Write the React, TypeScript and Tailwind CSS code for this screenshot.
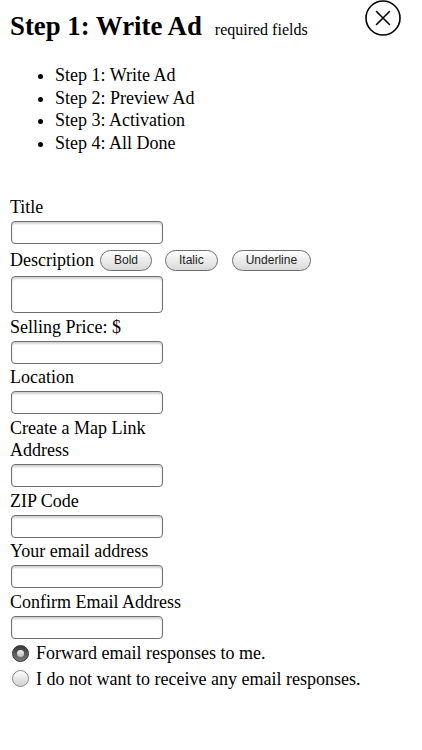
import React from "react";

const inputCls =
  "block ml-[1px] w-[152px] h-[23px] my-[2.45px] rounded-[4px] border border-[#6f6f6f] bg-white shadow-[inset_0_2px_2px_rgba(0,0,0,0.18)] outline-none";

const btnCls =
  "h-[21px] px-[13px] rounded-full border border-[#6e6e6e] bg-gradient-to-b from-white to-[#d9d9d9] text-[12px] leading-[19px] text-[#222] font-['Liberation_Sans',Arial,sans-serif]";

function Label({ children }: { children: React.ReactNode }) {
  return <div className="leading-[22.6px] h-[22.6px]">{children}</div>;
}

function Radio({ checked }: { checked?: boolean }) {
  if (checked) {
    return (
      <span className="flex items-center justify-center w-[17px] h-[17px] rounded-full bg-gradient-to-b from-[#3a3a3a] to-[#7a7a7a] border border-[#333]">
        <span className="w-[7px] h-[7px] rounded-full bg-gradient-to-b from-[#f2f2f2] to-[#bdbdbd]" />
      </span>
    );
  }
  return (
    <span className="block w-[17px] h-[17px] rounded-full border border-[#8a8a8a] bg-gradient-to-b from-white to-[#cfcfcf]" />
  );
}

export default function App() {
  return (
    <div className="min-h-[750px] bg-white text-black font-['Liberation_Serif','Times_New_Roman',serif] px-[10px]">
      <div className="flex items-start">
        <div className="flex items-baseline mt-[11px]">
          <h1 className="text-[26.8px] leading-[30px] font-bold">Step 1: Write Ad</h1>
          <span className="ml-[13px] text-[16px] leading-[20px]">required fields</span>
        </div>
        <button className="ml-auto mr-[11px] mt-0 w-[36px] h-[36px]" aria-label="close">
          <svg width="36" height="36" viewBox="0 0 36 36" fill="none" stroke="#000" strokeWidth="1.6">
            <circle cx="18" cy="18" r="17" />
            <path d="M11.5 11.5 L24.5 24.5 M24.5 11.5 L11.5 24.5" strokeLinecap="round" />
          </svg>
        </button>
      </div>

      <ul className="mt-[23px] pl-[45px] list-disc text-[18px] leading-[22.6px]">
        <li>Step 1: Write Ad</li>
        <li>Step 2: Preview Ad</li>
        <li>Step 3: Activation</li>
        <li>Step 4: All Done</li>
      </ul>

      <form className="mt-[42px] text-[18px]" onSubmit={(e) => e.preventDefault()}>
        <Label>Title</Label>
        <input type="text" className={inputCls} />

        <div className="flex items-center h-[27px]">
          <span className="leading-[22.6px]">Description</span>
          <button type="button" className={btnCls + " ml-[6px]"}>Bold</button>
          <button type="button" className={btnCls + " ml-[13px]"}>Italic</button>
          <button type="button" className={btnCls + " ml-[14px]"}>Underline</button>
        </div>
        <textarea className="block ml-[1px] w-[152px] h-[37px] my-[2.45px] rounded-[4px] border border-[#6f6f6f] bg-white shadow-[inset_0_2px_2px_rgba(0,0,0,0.18)] outline-none resize-none" />

        <Label>Selling Price: $</Label>
        <input type="text" className={inputCls} />

        <Label>Location</Label>
        <input type="text" className={inputCls} />

        <Label>Create a Map Link</Label>
        <Label>Address</Label>
        <input type="text" className={inputCls} />

        <Label>ZIP Code</Label>
        <input type="text" className={inputCls} />

        <Label>Your email address</Label>
        <input type="text" className={inputCls} />

        <Label>Confirm Email Address</Label>
        <input type="text" className={inputCls} />

        <div className="flex items-center h-[25.2px] mt-[2px] pl-[2px]">
          <Radio checked />
          <span className="ml-[7px] leading-[22.6px]">Forward email responses to me.</span>
        </div>
        <div className="flex items-center h-[25.2px] pl-[2px]">
          <Radio />
          <span className="ml-[7px] leading-[22.6px]">I do not want to receive any email responses.</span>
        </div>
      </form>
    </div>
  );
}
